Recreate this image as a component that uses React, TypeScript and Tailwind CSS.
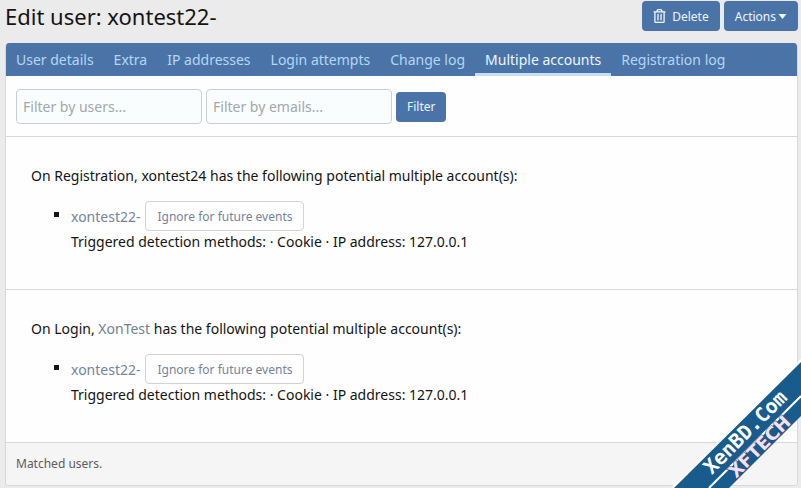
import { ReactNode } from 'react'

const tabs = [
  'User details',
  'Extra',
  'IP addresses',
  'Login attempts',
  'Change log',
  'Multiple accounts',
  'Registration log',
]

const events = [
  { id: 'registration', type: 'Registration', user: 'xontest24', linked: false },
  { id: 'login', type: 'Login', user: 'XonTest', linked: true },
]

export default function App() {
  return (
    <div className="relative min-h-screen overflow-hidden bg-[#ebebeb] pl-[5px] pr-[3px] pb-[2px] font-['Noto_Sans','Open_Sans',sans-serif] text-[14px] leading-[21px] text-[#141414]">
      <header className="flex h-[43px] items-start justify-between">
        <h1 className="text-[22px] leading-8">Edit user: xontest22-</h1>
        <div className="flex gap-1 pt-px">
          <PrimaryButton>
            <TrashIcon />
            Delete
          </PrimaryButton>
          <PrimaryButton>
            Actions
            <svg className="-ml-1 h-[5px] w-[9px]" viewBox="0 0 9 5" fill="currentColor" aria-hidden="true">
              <path d="M0.5 0h8L4.5 5z" />
            </svg>
          </PrimaryButton>
        </div>
      </header>

      <main className="overflow-hidden rounded border border-t-0 border-[#d8d8d8] bg-[#fefefe]">
        <nav className="flex h-[33px] bg-[#4a74a8]">
          {tabs.map((tab) => (
            <a
              key={tab}
              href="#"
              aria-current={tab === 'Multiple accounts' ? 'page' : undefined}
              className={
                tab === 'Multiple accounts'
                  ? 'whitespace-nowrap border-b-[3px] border-[#c8def5] px-[10px] pt-[6px] text-[#edf6fd]'
                  : 'whitespace-nowrap px-[10px] pt-[6px] text-[#b5d6f5]'
              }
            >
              {tab}
            </a>
          ))}
        </nav>

        <form className="flex items-center gap-1 border-b border-[#d8d8d8] px-[10px] pt-[13px] pb-3">
          <FilterInput label="Filter by users..." />
          <FilterInput label="Filter by emails..." />
          <PrimaryButton>Filter</PrimaryButton>
        </form>

        {events.map((event) => (
          <section key={event.id} className="border-b border-[#d8d8d8] px-[25px] pt-7 pb-[37px]">
            <p>
              On {event.type},{' '}
              {event.linked ? <a href="#" className="text-[#75818f]">{event.user}</a> : event.user} has the following
              potential multiple account(s):
            </p>
            <ul className="mt-[15px] list-[square] pl-10">
              <li>
                <div className="inline-flex items-center gap-[5px] align-middle">
                  <a href="#" className="text-[#75849b]">xontest22-</a>
                  <button
                    type="button"
                    className="h-[30px] whitespace-nowrap rounded border border-[#d0d3d6] px-[11px] text-[12px] text-[#75849b]"
                  >
                    Ignore for future events
                  </button>
                </div>
                <div>Triggered detection methods: · Cookie · IP address: 127.0.0.1</div>
              </li>
            </ul>
          </section>
        ))}

        <footer className="bg-[#f5f5f5] px-[10px] py-[11px] text-[12px] leading-5 text-[#5c5c5c]">Matched users.</footer>
      </main>

      <Ribbon />
    </div>
  )
}

function PrimaryButton({ children }: { children: ReactNode }) {
  return (
    <button
      type="button"
      className="flex h-[30px] items-center gap-[6px] whitespace-nowrap rounded bg-[#4a74a8] px-[11px] text-[12px] text-[#edf6fd]"
    >
      {children}
    </button>
  )
}

function FilterInput({ label }: { label: string }) {
  return (
    <input
      type="text"
      aria-label={label}
      placeholder={label}
      className="h-[35px] w-[186px] rounded border border-[#c9d0d4] bg-[#fafdfd] px-[6px] placeholder:text-[#a3a8aa]"
    />
  )
}

function TrashIcon() {
  return (
    <svg className="h-[14px] w-[13px]" viewBox="0 0 448 512" fill="currentColor" aria-hidden="true">
      <path d="M268 416h24a12 12 0 0 0 12-12V188a12 12 0 0 0-12-12h-24a12 12 0 0 0-12 12v216a12 12 0 0 0 12 12zM432 80h-82.4l-34-56.7A48 48 0 0 0 274.4 0H173.6a48 48 0 0 0-41.2 23.3L98.4 80H16A16 16 0 0 0 0 96v16a16 16 0 0 0 16 16h16v336a48 48 0 0 0 48 48h288a48 48 0 0 0 48-48V128h16a16 16 0 0 0 16-16V96a16 16 0 0 0-16-16zM171.8 50.9a6 6 0 0 1 5.2-2.9h94a6 6 0 0 1 5.2 2.9L293.6 80H154.4zM368 464H80V128h288zm-212-48h24a12 12 0 0 0 12-12V188a12 12 0 0 0-12-12h-24a12 12 0 0 0-12 12v216a12 12 0 0 0 12 12z" />
    </svg>
  )
}

// Diagonal badge over the bottom right corner
function Ribbon() {
  return (
    <svg className="pointer-events-none absolute right-0 bottom-0 h-[138px] w-[141px]" viewBox="0 0 141 138">
      <path d="M141 12v54L69 138H14z" fill="#185b8d" />
      <path d="M12 138L141 10" stroke="#fff" strokeWidth="2" />
      <path d="M49 138L141 46" stroke="#fff" strokeWidth="2" />
      <text
        transform="translate(90 87) rotate(-45)"
        textAnchor="middle"
        className="fill-white font-['DejaVu_Sans_Mono',monospace] text-[20px] font-bold"
      >
        XenBD.Com
      </text>
      <text
        transform="translate(104 101) rotate(-45)"
        textAnchor="middle"
        className="fill-[#eee2f3] stroke-[#4a3d66] font-['DejaVu_Sans',sans-serif] text-[18px] font-bold [paint-order:stroke]"
        strokeWidth="1"
      >
        XFTECH
      </text>
    </svg>
  )
}
